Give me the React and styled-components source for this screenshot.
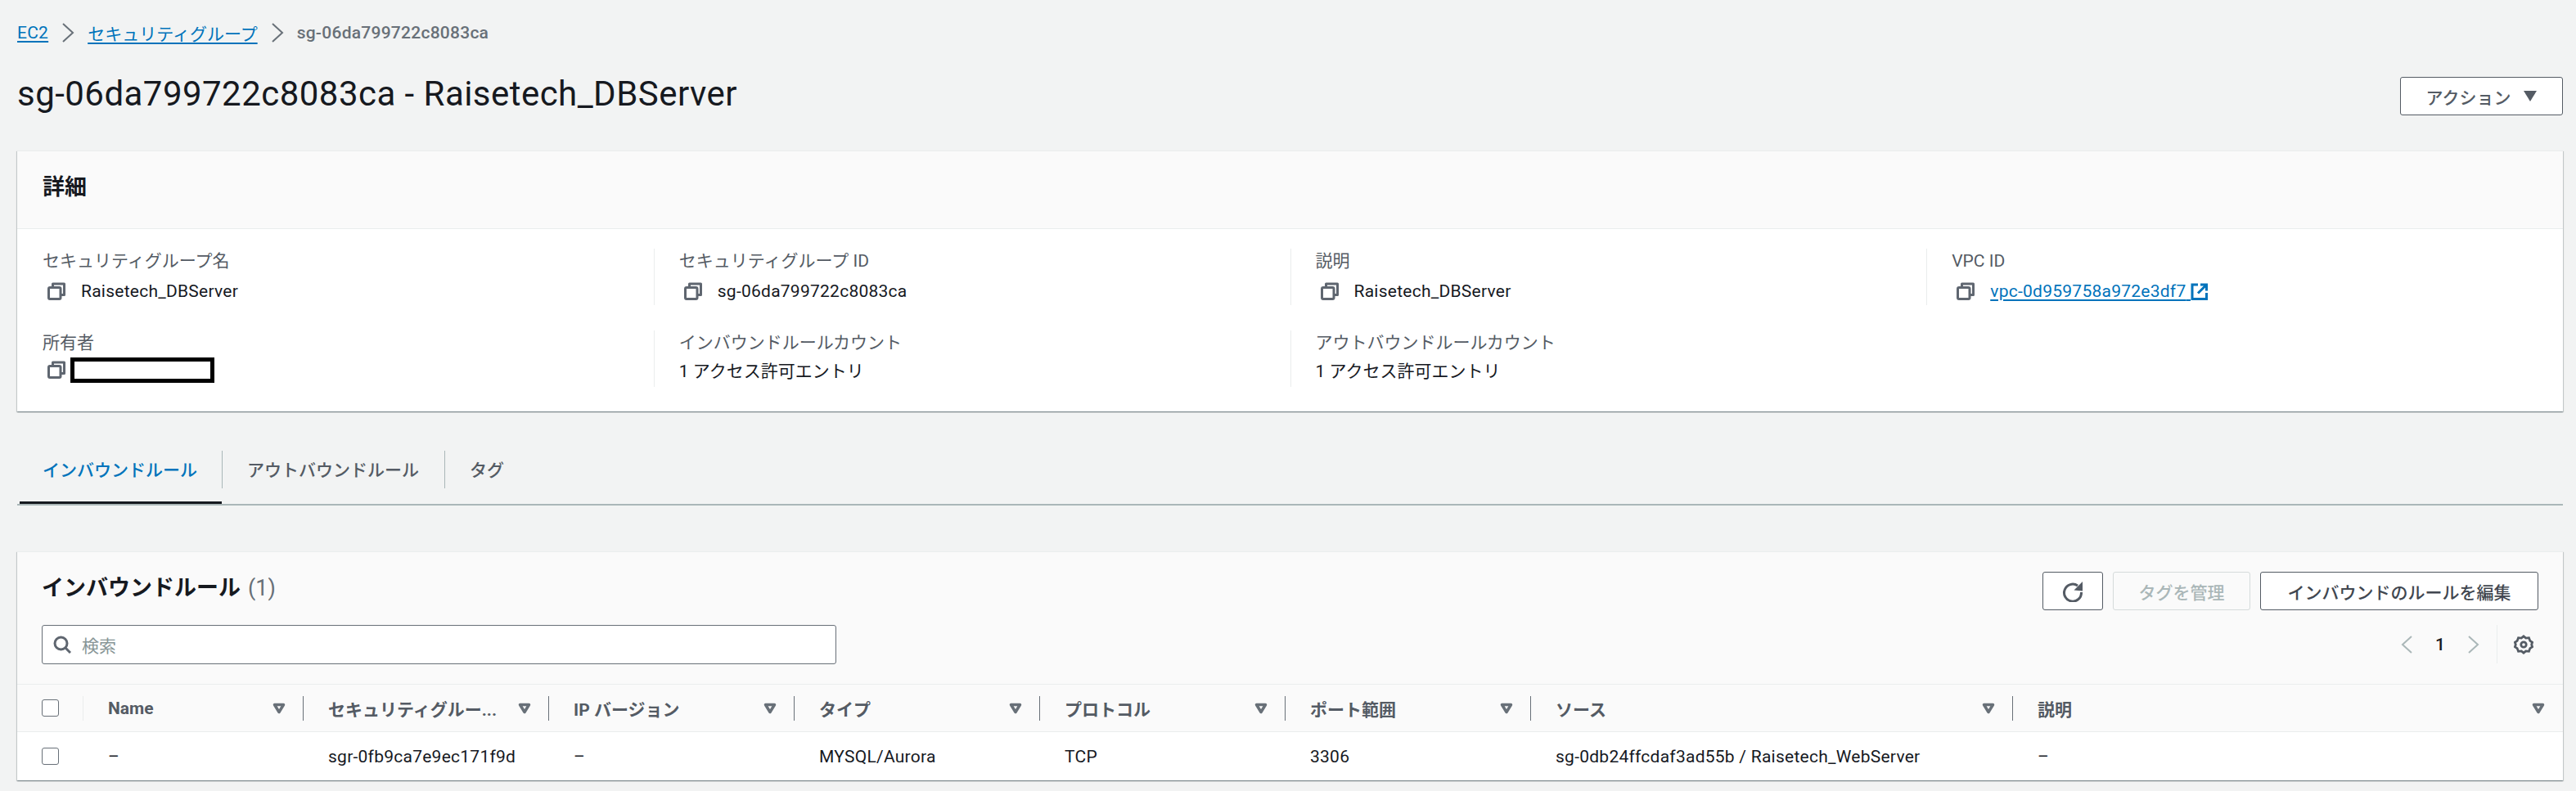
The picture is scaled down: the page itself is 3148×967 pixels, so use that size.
import React from 'react';
import styled, { createGlobalStyle, css } from 'styled-components';

const GlobalStyle = createGlobalStyle`
  html, body {
    margin: 0;
    padding: 0;
    background: #f2f3f3;
  }
  body {
    font-family: "Roboto", "Noto Sans CJK JP", sans-serif;
    font-size: 21px;
    color: #16191f;
  }
  * { box-sizing: border-box; }
`;

// Roboto runs a little narrower than the console font, CJK does not
const latin = css`
  letter-spacing: 0.012em;
`;

const Page = styled.div`
  width: 3148px;
  height: 967px;
  padding: 0 16px 0 21px;
  overflow: hidden;
`;

const Breadcrumbs = styled.nav`
  display: flex;
  align-items: center;
  height: 24px;
  margin-top: 28px;
`;

const Crumb = styled.a`
  color: #0073bb;
  text-decoration: underline;
  text-underline-offset: 3px;
  ${p => p.$latin && latin}
`;

const CrumbCurrent = styled.span`
  ${latin}
  color: #687078;
  font-weight: 500;
`;

const CrumbSep = styled.svg`
  width: 18px;
  height: 24px;
  margin: 0 15px;
  fill: none;
  stroke: #687078;
  stroke-width: 2;
`;

const TitleRow = styled.div`
  display: flex;
  justify-content: space-between;
  align-items: flex-start;
  margin-top: 42px;
  height: 90px;
`;

const Title = styled.h1`
  margin: -3px 0 0;
  font-size: 42px;
  font-weight: 400;
  line-height: 48px;
  letter-spacing: 0.011em;
`;

const Button = styled.button`
  display: flex;
  align-items: center;
  justify-content: center;
  height: 47px;
  width: ${p => p.$w}px;
  padding: 0;
  background: ${p => (p.disabled ? '#fafafa' : '#fff')};
  border: 1.5px solid ${p => (p.disabled ? '#d5dbdb' : '#545b64')};
  border-radius: 3px;
  color: ${p => (p.disabled ? '#aab7b8' : '#545b64')};
  font: 500 21px "Roboto", "Noto Sans CJK JP", sans-serif;
`;

const ActionCaret = styled.span`
  margin-left: 16px;
  width: 0;
  height: 0;
  border-left: 8px solid transparent;
  border-right: 8px solid transparent;
  border-top: 13px solid #545b64;
`;

const Panel = styled.section`
  background: #fff;
  box-shadow: 0 1px 1px 0 rgba(0, 28, 36, 0.3), 1px 1px 1px 0 rgba(0, 28, 36, 0.15), -1px 1px 1px 0 rgba(0, 28, 36, 0.15);
  border-top: 1px solid #eaeded;
`;

const DetailHeader = styled.header`
  display: flex;
  align-items: center;
  height: 95px;
  padding: 0 0 6px 31px;
  background: #fafafa;
  border-bottom: 1px solid #eaeded;
`;

const Heading = styled.h2`
  margin: 0;
  font-size: 27px;
  font-weight: 700;
  line-height: 30px;
`;

const DetailGrid = styled.div`
  display: grid;
  grid-template-columns: repeat(4, 1fr);
  row-gap: 31px;
  padding: 24px 0 30px;
`;

const DetailCell = styled.div`
  padding-left: ${p => (p.$first ? 31 : 30)}px;
  height: 69px;
  border-left: ${p => (p.$first ? '0' : '1px solid #eaeded')};
`;

const Label = styled.div`
  color: #545b64;
  line-height: 24px;
  margin-top: 3px;
  white-space: nowrap;
`;

const Value = styled.div`
  display: flex;
  align-items: center;
  gap: ${p => p.$gap ?? 19}px;
  height: 26px;
  margin-top: ${p => p.$mt ?? 12}px;
  padding-left: ${p => (p.$plain ? 0 : 6)}px;
  ${p => p.$latin && latin}
`;

const CopyIcon = styled.svg`
  width: 22px;
  height: 22px;
  fill: none;
  stroke: #5f6670;
  stroke-width: 3;
  stroke-linejoin: round;
  flex: none;
`;

const Redacted = styled.div`
  width: 176px;
  height: 31px;
  background: #fff;
  border: 5px solid #000;
`;

const ValueLink = styled.a`
  display: inline-flex;
  align-items: center;
  color: #0073bb;
  text-decoration: underline;
  text-underline-offset: 3px;
`;

const ExternalIcon = styled.svg`
  width: 21px;
  height: 21px;
  fill: none;
  stroke: #0073bb;
  stroke-width: 3;
`;

const Tabs = styled.div`
  display: flex;
  align-items: flex-start;
  height: 68px;
  margin-top: 47px;
  padding: 1px 0 0 3px;
  border-bottom: 2px solid #aab7b8;
`;

const Tab = styled.div`
  position: relative;
  display: flex;
  align-items: center;
  height: 46px;
  padding: 0 ${p => p.$pr}px 2px ${p => p.$pl}px;
  border-right: ${p => (p.$last ? '0' : '1px solid #aab7b8')};
  color: ${p => (p.$active ? '#0073bb' : '#545b64')};
  font-weight: 500;
  &::after {
    content: ${p => (p.$active ? '""' : 'none')};
    position: absolute;
    left: 0;
    right: 0;
    bottom: -19px;
    height: 3px;
    background: #16191f;
  }
`;

const RulesPanel = styled(Panel)`
  margin-top: 56px;
`;

const RulesHeader = styled.header`
  display: grid;
  grid-template-columns: 1fr auto;
  height: 161px;
  padding: 24px 30px 0 30px;
  background: #fafafa;
`;

const RulesTitle = styled(Heading)`
  margin-top: 5px;
`;

const Count = styled.span`
  margin-left: 9px;
  color: #687078;
  font-weight: 400;
`;

const Toolbar = styled.div`
  display: flex;
  gap: 12px;
`;

const EditButton = styled(Button)`
  color: #414750;
`;

const RefreshIcon = styled.svg`
  width: 26px;
  height: 26px;
  stroke: #545b64;
`;

const Search = styled.div`
  display: flex;
  align-items: center;
  gap: 13px;
  width: 971px;
  height: 48px;
  margin-top: 30px;
  padding-left: 13px;
  background: #fff;
  border: 1.5px solid #687078;
  border-radius: 3px;
  color: #879596;
`;

const SearchIcon = styled.svg`
  width: 22px;
  height: 22px;
  fill: none;
  stroke: #5f6670;
  stroke-width: 3;
`;

const Pager = styled.div`
  display: flex;
  align-items: center;
  height: 47px;
  margin-top: 18px;
  justify-content: flex-end;
`;

const PagerArrow = styled.svg`
  width: 16px;
  height: 24px;
  fill: none;
  stroke: #aab7b8;
  stroke-width: 2;
`;

const PageNumber = styled.span`
  margin: 0 27px;
  font-weight: 500;
`;

const PagerDivider = styled.span`
  width: 1px;
  height: 47px;
  margin: 0 20px;
  background: #eaeded;
`;

const GearIcon = styled.svg`
  width: 24px;
  height: 24px;
  fill: none;
  stroke: #545b64;
  stroke-width: 3;
  margin-right: 6px;
`;

const COLUMNS = '81px 269px 300px 300px 300px 300px 300px 589px 1fr';

const Row = styled.div`
  display: grid;
  grid-template-columns: ${COLUMNS};
  align-items: center;
  height: ${p => p.$h}px;
  background: ${p => p.$bg};
  border-top: 1px solid #eaeded;
`;

const HeadCell = styled.div`
  display: flex;
  align-items: center;
  justify-content: space-between;
  height: 30px;
  padding: 0 21px 0 30px;
  border-right: 1px solid ${p => (p.$end ? 'transparent' : '#687078')};
  color: #545b64;
  font-weight: 700;
  white-space: nowrap;
`;

const CheckCell = styled.div`
  display: flex;
  align-items: center;
  height: 30px;
  padding-left: 30px;
  border-right: 1px solid ${p => (p.$line ? '#eaeded' : 'transparent')};
`;

const Checkbox = styled.span`
  width: 21px;
  height: 21px;
  background: #fff;
  border: 1.5px solid #687078;
  border-radius: 3px;
`;

const SortIcon = styled.svg`
  width: 16px;
  height: 14px;
  flex: none;
  fill: none;
  stroke: #687078;
  stroke-width: 3.5;
  stroke-linejoin: round;
`;

const BodyCell = styled.div`
  ${latin}
  padding-left: 30px;
  white-space: nowrap;
`;

const Copy = () => (
  <CopyIcon viewBox="0 0 22 22">
    <path d="M6.500 6V2H20.500V15.500H16" />
    <rect x="1.500" y="6.500" width="14.500" height="14" rx="1.500" />
  </CopyIcon>
);

const Sort = () => (
  <SortIcon viewBox="0 0 16 14">
    <path d="M2.500 2.500h11L8 11.500z" />
  </SortIcon>
);

const DETAILS = [
  { label: 'セキュリティグループ名', value: 'Raisetech_DBServer', copy: true },
  { label: 'セキュリティグループ ID', value: 'sg-06da799722c8083ca', copy: true },
  { label: '説明', value: 'Raisetech_DBServer', copy: true },
  { label: 'VPC ID', link: 'vpc-0d959758a972e3df7', copy: true },
  { label: '所有者', redacted: true },
  { label: 'インバウンドルールカウント', value: '1 アクセス許可エントリ' },
  { label: 'アウトバウンドルールカウント', value: '1 アクセス許可エントリ' },
];

const HEADERS = ['Name', 'セキュリティグルー...', 'IP バージョン', 'タイプ', 'プロトコル', 'ポート範囲', 'ソース', '説明'];
const CELLS = ['–', 'sgr-0fb9ca7e9ec171f9d', '–', 'MYSQL/Aurora', 'TCP', '3306', 'sg-0db24ffcdaf3ad55b / Raisetech_WebServer', '–'];

export default function App() {
  return (
    <Page>
      <GlobalStyle />
      <Breadcrumbs>
        <Crumb $latin>EC2</Crumb>
        <CrumbSep viewBox="0 0 18 24"><path d="M3 1l12 11L3 23" /></CrumbSep>
        <Crumb>セキュリティグループ</Crumb>
        <CrumbSep viewBox="0 0 18 24"><path d="M3 1l12 11L3 23" /></CrumbSep>
        <CrumbCurrent>sg-06da799722c8083ca</CrumbCurrent>
      </Breadcrumbs>

      <TitleRow>
        <Title>sg-06da799722c8083ca - Raisetech_DBServer</Title>
        <Button $w={199}>アクション<ActionCaret /></Button>
      </TitleRow>

      <Panel>
        <DetailHeader><Heading>詳細</Heading></DetailHeader>
        <DetailGrid>
          {DETAILS.map((d, i) => (
            <DetailCell key={d.label} $first={i % 4 === 0}>
              <Label>{d.label}</Label>
              {d.value && d.copy && <Value $latin><Copy />{d.value}</Value>}
              {d.value && !d.copy && <Value $plain $mt={8}>{d.value}</Value>}
              {d.link && (
                <Value $latin>
                  <Copy />
                  <ValueLink>
                    {d.link}{'\u00a0'}
                    <ExternalIcon viewBox="0 0 21 21">
                      <path d="M9 2H2v17.500h17.500V12M12 2h7.500v7.500M19 2.500L9 12.500" />
                    </ExternalIcon>
                  </ValueLink>
                </Value>
              )}
              {d.redacted && <Value $gap={6} $mt={8}><Copy /><Redacted /></Value>}
            </DetailCell>
          ))}
        </DetailGrid>
      </Panel>

      <Tabs>
        <Tab $active $pl={28} $pr={30}>インバウンドルール</Tab>
        <Tab $pl={30} $pr={31}>アウトバウンドルール</Tab>
        <Tab $last $pl={30} $pr={0}>タグ</Tab>
      </Tabs>

      <RulesPanel>
        <RulesHeader>
          <div>
            <RulesTitle>インバウンドルール<Count>(1)</Count></RulesTitle>
            <Search>
              <SearchIcon viewBox="0 0 22 22">
                <circle cx="9.500" cy="9.500" r="7.500" />
                <path d="M15 15l6 6" />
              </SearchIcon>
              検索
            </Search>
          </div>
          <div>
            <Toolbar>
              <Button $w={74}>
                <RefreshIcon viewBox="0 0 26 26">
                  <path d="M19 6A10.500 10.500 0 1 0 23.500 14" fill="none" strokeWidth="3" />
                  <path d="M25 1v11.500L14.500 11.500z" fill="#545b64" strokeWidth="0" />
                </RefreshIcon>
              </Button>
              <Button $w={168} disabled>タグを管理</Button>
              <EditButton $w={340}>インバウンドのルールを編集</EditButton>
            </Toolbar>
            <Pager>
              <PagerArrow viewBox="0 0 16 24"><path d="M14 2L3 12l11 10" /></PagerArrow>
              <PageNumber>1</PageNumber>
              <PagerArrow viewBox="0 0 16 24"><path d="M2 2l11 10L2 22" /></PagerArrow>
              <PagerDivider />
              <GearIcon viewBox="0 0 26 26">
                <path d="M13 2l3 2.500 4-.5 1.500 4 3 2-1 3 1 3-3 2-1.500 4-4-.5-3 2.500-3-2.500-4 .5-1.500-4-3-2 1-3-1-3 3-2 1.500-4 4 .5z" />
                <circle cx="13" cy="13" r="3.500" />
              </GearIcon>
            </Pager>
          </div>
        </RulesHeader>
        <Row $h={58} $bg="#fafafa">
          <CheckCell $line><Checkbox /></CheckCell>
          {HEADERS.map((h, i) => (
            <HeadCell key={i} $end={i === HEADERS.length - 1}>{h}<Sort /></HeadCell>
          ))}
        </Row>
        <Row $h={60} $bg="#fff">
          <CheckCell><Checkbox /></CheckCell>
          {CELLS.map((c, i) => <BodyCell key={i}>{c}</BodyCell>)}
        </Row>
      </RulesPanel>
    </Page>
  );
}
